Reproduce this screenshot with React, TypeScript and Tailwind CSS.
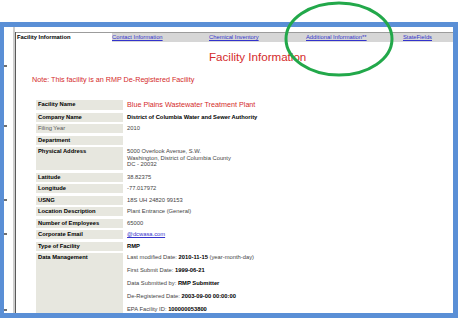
const tabs = [
  { label: "Facility Information", active: true },
  { label: "Contact Information" },
  { label: "Chemical Inventory" },
  { label: "Additional Information**" },
  { label: "StateFields" },
];

type Row = {
  label: string;
  value: React.ReactNode;
  plainLabel?: boolean;
};

const rows: Row[] = [
  {
    label: "Facility Name",
    value: (
      <span className="text-[7.2px] text-[#d42a2a]">
        Blue Plains Wastewater Treatment Plant
      </span>
    ),
  },
  {
    label: "Company Name",
    value: (
      <span className="font-bold text-black">
        District of Columbia Water and Sewer Authority
      </span>
    ),
  },
  { label: "Filing Year", value: "2010", plainLabel: true },
  { label: "Department", value: "" },
  {
    label: "Physical Address",
    value: (
      <div className="pt-[1px] leading-[6.6px]">
        <div>5000 Overlook Avenue, S.W.</div>
        <div>Washington, District of Columbia County</div>
        <div>DC - 20032</div>
      </div>
    ),
  },
  { label: "Latitude", value: "38.82375" },
  { label: "Longitude", value: "-77.017972" },
  { label: "USNG", value: "18S UH 24820 99153" },
  { label: "Location Description", value: "Plant Entrance (General)" },
  { label: "Number of Employees", value: "65000" },
  {
    label: "Corporate Email",
    value: <span className="text-[#3333cc] underline">@dcwasa.com</span>,
  },
  {
    label: "Type of Facility",
    value: <span className="font-bold text-black">RMP</span>,
  },
];

const dataManagement: [string, string, string?][] = [
  ["Last modified Date:", "2010-11-15", "(year-month-day)"],
  ["First Submit Date:", "1999-06-21"],
  ["Data Submitted by:", "RMP Submitter"],
  ["De-Registered Date:", "2003-09-00 00:00:00"],
  ["EPA Facility ID:", "100000053800"],
];

// little grey ticks down the left margin of the screenshot
const ticks = [38, 58, 72, 32, 74];

export default function App() {
  return (
    <div className="relative h-[319px] w-[458px] overflow-hidden bg-white font-['Liberation_Sans',Arial,sans-serif]">
      <div className="h-[22px]" />
      <div className="flex h-[296px] overflow-hidden border-b-[5px] border-l-[4px] border-r-[5px] border-t-[5px] border-[#5a8fd6] bg-white">
        <div className="flex w-[9px] flex-col items-start">
          {ticks.map((gap, i) => (
            <div
              key={i}
              className="h-[2px] w-[3px] bg-[#707070]"
              style={{ marginTop: gap }}
            />
          ))}
        </div>
        <div className="w-[2px] bg-[#cdcdcd]" />
        <div className="flex min-h-0 min-w-0 flex-1 flex-col overflow-hidden pt-[5px]">
          <div className="flex min-h-0 flex-1 flex-col overflow-hidden border-l border-[#5a5a5a]">
            <div className="grid h-[10px] shrink-0 grid-cols-[96px_97px_97px_97px_1fr] items-center border-t border-[#9c9c9c] bg-[#d6d6d6] text-[5.8px] leading-[9px]">
              {tabs.map((t) =>
                t.active ? (
                  <div key={t.label} className="h-full bg-white pl-[1px] font-bold text-black">
                    {t.label}
                  </div>
                ) : (
                  <div key={t.label} className="text-[#3333cc] underline">
                    {t.label}
                  </div>
                )
              )}
            </div>

            <h1 className="mt-[8px] pl-[193px] text-[11.6px] leading-[13px] text-[#d42a2a]">
              Facility Information
            </h1>

            <p className="mt-[12px] pl-[16px] text-[7.2px] leading-[9px] text-[#d42a2a]">
              Note: This facility is an RMP De-Registered Facility
            </p>

            <div className="ml-[20px] mt-[16px] grid grid-cols-[87px_1fr] gap-x-[4px] gap-y-[2.5px] text-[5.8px] leading-[9px] text-[#444]">
              {rows.map((r) => (
                <div key={r.label} className="contents">
                  <div
                    className={
                      r.plainLabel
                        ? "bg-[#e7e7df] pl-[2px] text-[#555]"
                        : "bg-[#e7e7df] pl-[2px] font-bold text-black"
                    }
                  >
                    {r.label}
                  </div>
                  <div className={r.label === "Physical Address" ? "h-[23px]" : ""}>
                    {r.value}
                  </div>
                </div>
              ))}
              <div className="h-[62px] bg-[#e7e7df] pl-[2px] font-bold text-black">
                Data Management
              </div>
              <div className="flex flex-col gap-[5px] leading-[8px]">
                {dataManagement.map(([k, v, extra]) => (
                  <div key={k}>
                    {k} <span className="font-bold text-black">{v}</span>
                    {extra ? ` ${extra}` : null}
                  </div>
                ))}
              </div>
            </div>
          </div>
        </div>
      </div>

      <svg
        className="absolute left-[284px] top-[1px]"
        width="110"
        height="76"
        viewBox="0 0 110 76"
      >
        <ellipse
          cx="55"
          cy="38"
          rx="53"
          ry="36"
          fill="none"
          stroke="#22a84a"
          strokeWidth="3"
        />
      </svg>
    </div>
  );
}
